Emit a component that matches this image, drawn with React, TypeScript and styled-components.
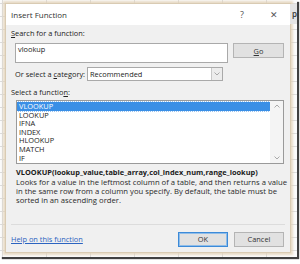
import styled, { createGlobalStyle } from "styled-components"

const GlobalStyle = createGlobalStyle`
    html, body {
        margin: 0;
        padding: 0;
        background: #ffffff;
    }
    body {
        width: 300px;
        height: 264px;
        overflow: hidden;
        font-family: "Open Sans", "Noto Sans", sans-serif;
    }
`

const Sheet = styled.div`
    position: relative;
    width: 297px;
    height: 257px;
    padding: 4px 0 0 6px;
    box-sizing: border-box;
    background-color: #fbfbfb;
    background-image:
        linear-gradient(to right, #dcdcdc 1px, transparent 1px),
        linear-gradient(to bottom, #dcdcdc 1px, transparent 1px);
    background-size: 44px 13px;
    background-position: 2px 3px;
    box-shadow: 2px 2px 1px rgba(30, 30, 30, 0.85);
`

const ColumnHeader = styled.div`
    position: absolute;
    top: 4px;
    right: 0;
    width: 7px;
    height: 20px;
    background: #e4e4e4;
    font-size: 8px;
    font-weight: 600;
    color: #333;
    line-height: 20px;
    text-align: right;
`

const Dialog = styled.div`
    width: 284px;
    height: 248px;
    background: #f0f0f0;
    box-shadow: 0 0 0 1px #d9cbb3, 0 0 2px 3px rgba(225, 208, 180, 0.75);
    display: flex;
    flex-direction: column;
    color: #222;
    font-size: 7.4px;
`

const TitleBar = styled.div`
    height: 21px;
    background: #ffffff;
    display: flex;
    align-items: center;
    padding: 0 6px 0 5px;
    font-size: 8px;
    color: #333;
`

const Title = styled.span`
    flex: 1;
`

const TitleButton = styled.span<{ $gap?: number }>`
    width: 20px;
    text-align: center;
    font-size: 9px;
    color: #555;
    margin-left: ${(p) => p.$gap ?? 0}px;
`

const Body = styled.div`
    flex: 1;
    display: flex;
    flex-direction: column;
    padding: 0 5px;
`

const Label = styled.div<{ $top: number }>`
    line-height: 10px;
    margin-top: ${(p) => p.$top}px;
    white-space: nowrap;
`

const Key = styled.span`
    text-decoration: underline;
`

const SearchRow = styled.div`
    display: flex;
    align-items: flex-start;
    gap: 5px;
    margin: 5px 0 0 4px;
`

const SearchBox = styled.div`
    width: 213px;
    height: 20px;
    box-sizing: border-box;
    background: #fff;
    border: 1px solid #a9a9a9;
    padding: 1px 2px;
    line-height: 9px;
`

const Button = styled.div<{ $w: number; $primary?: boolean }>`
    width: ${(p) => p.$w}px;
    height: 15px;
    box-sizing: border-box;
    background: #e1e1e1;
    border: 1px solid ${(p) => (p.$primary ? "#3c8ad8" : "#b4b4b4")};
    box-shadow: ${(p) => (p.$primary ? "inset 0 0 0 1px #8fbde9" : "none")};
    display: flex;
    align-items: center;
    justify-content: center;
    color: #333;
`

const CategoryRow = styled.div`
    display: flex;
    align-items: center;
    gap: 2px;
    margin: 4px 0 0 4px;
    height: 14px;
`

const Select = styled.div`
    width: 136px;
    height: 14px;
    box-sizing: border-box;
    background: #fff;
    border: 1px solid #a9a9a9;
    display: flex;
    align-items: center;
    padding-left: 2px;
`

const SelectText = styled.span`
    flex: 1;
`

const SelectArrow = styled.div`
    width: 10px;
    height: 12px;
    border-left: 1px solid #c8c8c8;
    background: #ececec;
    display: flex;
    align-items: center;
    justify-content: center;
`

const List = styled.div`
    margin: 3px 0 0 5px;
    width: 268px;
    height: 64px;
    box-sizing: border-box;
    background: #fff;
    border: 1px solid #9a9a9a;
    display: flex;
    overflow: hidden;
`

const Rows = styled.div`
    flex: 1;
    padding-top: 1px;
`

const Row = styled.div<{ $selected?: boolean }>`
    height: 8.6px;
    line-height: 8.6px;
    padding-left: 2px;
    background: ${(p) => (p.$selected ? "#3a8fe6" : "transparent")};
    color: ${(p) => (p.$selected ? "#fff" : "#222")};
    outline: ${(p) => (p.$selected ? "1px dotted #9cc4ee" : "none")};
`

const Scrollbar = styled.div`
    width: 13px;
    background: #f4f4f4;
    display: flex;
    flex-direction: column;
    justify-content: space-between;
    align-items: center;
    padding: 3px 0;
`

const Syntax = styled.div`
    margin: 4px 0 0 5px;
    font-weight: 700;
    line-height: 9px;
    white-space: nowrap;
    color: #1a1a1a;
`

const Description = styled.div`
    margin: 1px 0 0 5px;
    font-size: 7.7px;
    line-height: 9px;
    color: #2a2a2a;
    white-space: nowrap;
`

const Footer = styled.div`
    margin-top: auto;
    border-top: 1px solid #dcdcdc;
    height: 28px;
    display: flex;
    align-items: center;
    padding-bottom: 2px;
    box-sizing: border-box;
`

const HelpLink = styled.a`
    flex: 1;
    color: #2b63c0;
    text-decoration: underline;
    cursor: pointer;
    margin-top: 3px;
`

const ButtonGroup = styled.div`
    display: flex;
    gap: 6px;
    margin-right: 1px;
    margin-top: 3px;
`

const Arrow = ({ up }: { up?: boolean }) => (
    <svg width="6" height="4" viewBox="0 0 6 4">
        <path d={up ? "M0.5 3.5 L3 1 L5.5 3.5" : "M0.5 0.5 L3 3 L5.5 0.5"} fill="none" stroke="#a0a0a0" strokeWidth="0.9" />
    </svg>
)

const functions = ["VLOOKUP", "LOOKUP", "IFNA", "INDEX", "HLOOKUP", "MATCH", "IF"]

const descriptionLines = [
    "Looks for a value in the leftmost column of a table, and then returns a value",
    "in the same row from a column you specify. By default, the table must be",
    "sorted in an ascending order.",
]

export default function App() {
    return (
        <>
            <GlobalStyle />
            <Sheet>
                <ColumnHeader>p</ColumnHeader>
                <Dialog>
                    <TitleBar>
                        <Title>Insert Function</Title>
                        <TitleButton>?</TitleButton>
                        <TitleButton $gap={12}>✕</TitleButton>
                    </TitleBar>
                    <Body>
                        <Label $top={3}><Key>S</Key>earch for a function:</Label>
                        <SearchRow>
                            <SearchBox>vlookup</SearchBox>
                            <Button $w={51}><Key>G</Key>o</Button>
                        </SearchRow>
                        <CategoryRow>
                            <span>Or select a <Key>c</Key>ategory:</span>
                            <Select>
                                <SelectText>Recommended</SelectText>
                                <SelectArrow><Arrow /></SelectArrow>
                            </Select>
                        </CategoryRow>
                        <Label $top={6}>Select a functio<Key>n</Key>:</Label>
                        <List>
                            <Rows>
                                {functions.map((name, i) => (
                                    <Row key={name} $selected={i === 0}>{name}</Row>
                                ))}
                            </Rows>
                            <Scrollbar>
                                <Arrow up />
                                <Arrow />
                            </Scrollbar>
                        </List>
                        <Syntax>VLOOKUP(lookup_value,table_array,col_index_num,range_lookup)</Syntax>
                        <Description>
                            {descriptionLines.map((line) => (
                                <div key={line}>{line}</div>
                            ))}
                        </Description>
                        <Footer>
                            <HelpLink>Help on this function</HelpLink>
                            <ButtonGroup>
                                <Button $w={50} $primary>OK</Button>
                                <Button $w={50}>Cancel</Button>
                            </ButtonGroup>
                        </Footer>
                    </Body>
                </Dialog>
            </Sheet>
        </>
    )
}
